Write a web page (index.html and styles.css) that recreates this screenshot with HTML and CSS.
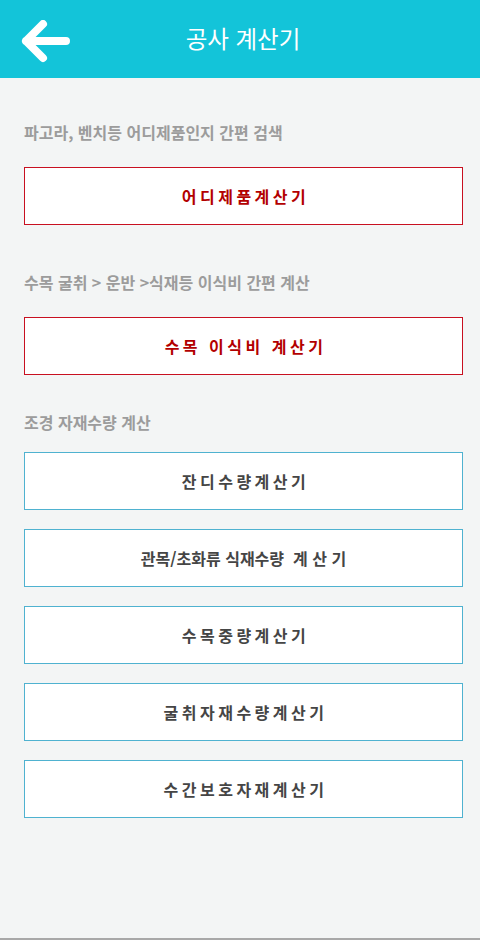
FILE: index.html
```html
<!DOCTYPE html>
<html lang="ko">
<head>
    <meta charset="UTF-8">
    <meta name="viewport" content="width=device-width, initial-scale=1.0">
    <title>공사 계산기</title>
    <link rel="stylesheet" href="styles.css">
</head>
<body>
    <div class="page">
        <header class="topbar">
            <a class="back" href="#">
                <svg width="50" height="44" viewBox="0 0 50 44">
                    <path d="M5 21 H45 M22 4 L5 21 L22 38" fill="none" stroke="#fff" stroke-width="8" stroke-linecap="round" stroke-linejoin="round"/>
                </svg>
            </a>
            <h1>공사 계산기</h1>
            <span></span>
        </header>

        <main class="content">
            <section class="group">
                <p class="label">파고라, 벤치등 어디제품인지 간편 검색</p>
                <button type="button" class="calc red">어디제품계산기</button>
            </section>

            <section class="group">
                <p class="label">수목 굴취 &gt; 운반 &gt;식재등 이식비 간편 계산</p>
                <button type="button" class="calc red">수목 이식비 계산기</button>
            </section>

            <section class="group last">
                <p class="label">조경 자재수량 계산</p>
                <button type="button" class="calc">잔디수량계산기</button>
                <button type="button" class="calc plain">관목/초화류 식재수량&nbsp; 계 산 기</button>
                <button type="button" class="calc">수목중량계산기</button>
                <button type="button" class="calc">굴취자재수량계산기</button>
                <button type="button" class="calc">수간보호자재계산기</button>
            </section>
        </main>

        <div class="bottom-line"></div>
    </div>
</body>
</html>
```

FILE: styles.css
```css
body {
    margin: 0;
    font-family: "Noto Sans CJK KR", "Noto Sans", sans-serif;
    background-color: #f3f5f5;
}
.page {
    display: flex;
    flex-direction: column;
    min-height: 100vh;
}
.topbar {
    height: 78px;
    background-color: #13c4d9;
    display: grid;
    grid-template-columns: 1fr auto 1fr;
    align-items: center;
}
.back {
    display: flex;
    align-items: center;
    padding: 6px 0 0 21px;
    width: 54px;
}
.topbar h1 {
    margin: 0 0 0 6px;
    color: #fff;
    font-size: 23.5px;
    font-weight: 400;
    line-height: 1;
}
.content {
    flex: 1;
    padding: 44px 17px 0 24px;
}
.group {
    display: flex;
    flex-direction: column;
    margin-bottom: 47px;
}
.group.last {
    margin-top: -10px;
    gap: 19px;
}
.label {
    margin: 0 0 25px 0;
    color: #9c9c9c;
    font-size: 16px;
    font-weight: 700;
    line-height: 20px;
}
.group.last .label {
    margin-bottom: 1px;
}
.calc {
    height: 58px;
    background: #fff;
    border: 1px solid #4fb2d0;
    font-family: inherit;
    font-size: 16px;
    font-weight: 700;
    color: #454545;
    letter-spacing: 3.5px;
    padding: 0 0 0 4px;
    cursor: pointer;
}
.calc.red {
    border-color: #c81020;
    color: #b30000;
}
.calc.plain {
    letter-spacing: 0;
    padding: 0;
}
.bottom-line {
    height: 2px;
    background: #a8a8a8;
}
```
